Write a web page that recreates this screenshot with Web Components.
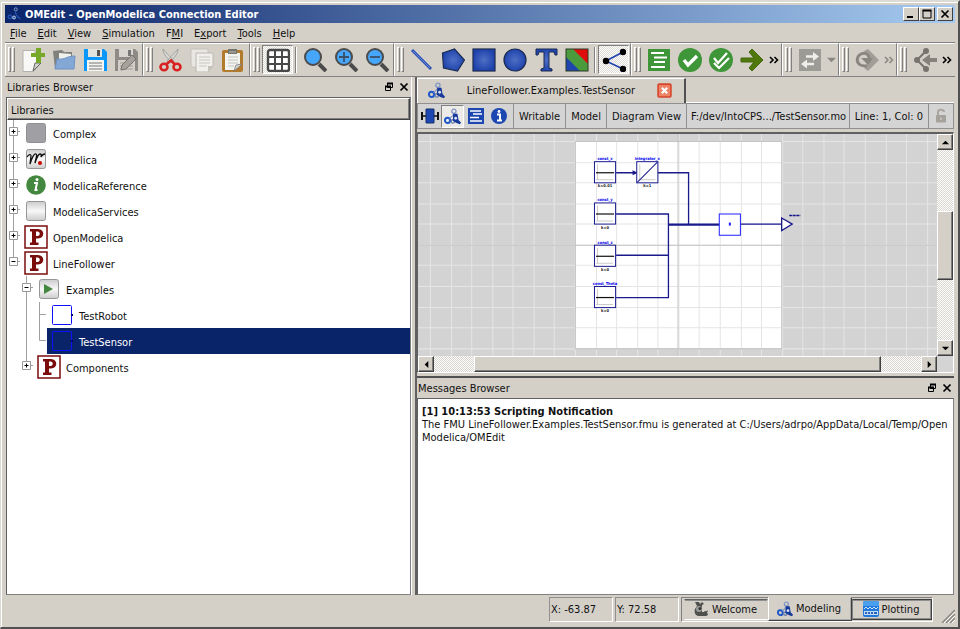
<!DOCTYPE html>
<html lang="en">
<head>
<meta charset="utf-8">
<title>OMEdit - OpenModelica Connection Editor</title>
<style>
html, body { margin: 0; height: 100%; background: #fff; }
body { font: 11px/13px "DejaVu Sans Condensed", "DejaVu Sans", sans-serif; color: #111; overflow: hidden; }
</style>
</head>
<body>
<om-window></om-window>
<script>
const ICONS = {
  network: ['0 0 24 24', '<g fill="none"><circle cx="14" cy="4.500" r="3" stroke="#7f93c4" stroke-width="1.800"/><circle cx="5" cy="17.500" r="3.600" stroke="#1c56c8" stroke-width="2.800"/><circle cx="12.500" cy="19" r="2.400" stroke="#6d80ae" stroke-width="2"/><path d="M8 15l6-6" stroke="#8596bd" stroke-width="1.600"/></g><path d="M13 8h6l1.500 9 3.500 3.500-1.500 2.500-5-2-5-3z" fill="#16389a"/><circle cx="16.500" cy="14.500" r="2" fill="#dce4f6"/>'],
  netlight: ['0 0 24 24', '<g fill="none" stroke="#2456b8" stroke-width="2.2"><circle cx="5" cy="17" r="3" /><circle cx="15" cy="4" r="2.6" stroke="#8fa6cf" stroke-width="1.6"/><circle cx="12" cy="18" r="2.2" stroke="#99b3dd"/><path d="M15 8c-2 3 2 5 3 9l5 3"/></g>'],
  newdoc: ['0 0 24 24', '<path d="M2 2.500h12v4h5v9l-6 8H2z" fill="#f8f8f6" stroke="#b4b2ac"/><path d="M12 23l2-8 6 0z" fill="#d5d5d0" stroke="#666"/><path d="M15 0h5v5h5v4h-5v6h-5V9h-5V5h5z" fill="#76a928"/>'],
  open: ['0 0 24 24', '<path d="M1 3l9-1 2 2h8v17H3z" fill="#80817c"/><path d="M7 5l12 1v9H7z" fill="#f1f1ec"/><path d="M3 21L5 11c9 1 9-3 18-3l-1 13z" fill="#84a8d5" stroke="#6d93c4"/>'],
  save: ['0 0 24 24', '<path d="M1 1h20l3 3v19H1z" fill="#0a97fa"/><path d="M5 1h14v8H5z" fill="#e3e3e0"/><path d="M14 2h3v6h-3z" fill="#555"/><path d="M4 12h17v11H4z" fill="#f4f4f0"/><path d="M6 15h13M6 18h13M6 21h13" stroke="#777"/>'],
  saveas: ['0 0 24 24', '<path d="M1 1h20l3 3v19H1z" fill="#8e8b86"/><path d="M5 1h14v8H5z" fill="#d8d5d0"/><path d="M14 2h3v6h-3z" fill="#777"/><path d="M4 12h17v11H4z" fill="#d2cfc9"/><path d="M6 15h13M6 18h13M6 21h13" stroke="#a19d96"/><path d="M7 22l1-5L18 7l4 4-10 10z" fill="#a6a29b" stroke="#77746e"/>'],
  cut: ['0 0 24 24', '<path d="M4 1c0 5 4 9 9 14l2-2C11 8 7 5 4 1zM19 1c0 5-4 9-9 14l-2-2C12 8 16 5 19 1z" fill="#d7d7d4" stroke="#8e8e8a" stroke-width=".7"/><g fill="none" stroke="#d82222" stroke-width="2.600"><ellipse cx="5" cy="19" rx="3.500" ry="3.200"/><ellipse cx="18" cy="19" rx="3.500" ry="3.200"/><path d="M7 16.500l5-4 4 4"/></g>'],
  copy: ['0 0 24 24', '<path d="M1 1h17v18H1z" fill="#e8e7e3" stroke="#c5c2bb"/><path d="M6 5h17v13l-5 6H6z" fill="#f0efec" stroke="#bbb8b0"/><path d="M9 9h11M9 12h11M9 15h11M9 18h8" stroke="#cac7c1"/><path d="M18 23v-5h5z" fill="#c3c0b8"/>'],
  paste: ['0 0 24 24', '<rect x="1" y="2" width="21" height="22" rx="2" fill="#b27a2d"/><path d="M4 5h15v13l-5 4H4z" fill="#f3f3f0"/><path d="M7 9h10M7 12h10M7 15h10M7 18h6" stroke="#c2c2be"/><path d="M13 23l2-6 6-1z" fill="#d9d9d5" stroke="#777" stroke-width=".8"/><path d="M7 1h9v5H7z" fill="#74756f"/><path d="M8 4h7" stroke="#bbb"/>'],
  grid: ['0 0 24 24', '<rect x="2" y="2" width="21" height="21" rx="2" fill="#fff" stroke="#484848" stroke-width="2.400"/><path d="M2 9h21M2 16h21M9 2v21M16 2v21" stroke="#484848" stroke-width="2"/>'],
  zoom: ['0 0 24 24', '<path d="M16 16l7 7" stroke="#4b4b4b" stroke-width="4"/><circle cx="10" cy="9" r="8" fill="#45a6fb" stroke="#4b4b4b" stroke-width="2"/>'],
  zoomin: ['0 0 24 24', '<path d="M16 16l7 7" stroke="#4b4b4b" stroke-width="4"/><circle cx="10" cy="9" r="8" fill="#45a6fb" stroke="#4b4b4b" stroke-width="2"/><path d="M5 9h10M10 4v10" stroke="#3c5068" stroke-width="1.800"/>'],
  zoomout: ['0 0 24 24', '<path d="M16 16l7 7" stroke="#4b4b4b" stroke-width="4"/><circle cx="10" cy="9" r="8" fill="#45a6fb" stroke="#4b4b4b" stroke-width="2"/><path d="M5 9h10" stroke="#3c5068" stroke-width="1.800"/>'],
  line: ['0 0 24 24', '<path d="M2 2l19 19" stroke="#2a4fb5" stroke-width="3"/><path d="M3 3l17 17" stroke="#6f8bd0"/>'],
  polygon: ['0 0 24 24', '<path d="M1.500 5l12-4 10 11-7 11-14-3z" fill="url(#g)" stroke="#1b2b50" stroke-width="1.200"/>'],
  rect: ['0 0 24 24', '<rect x="1" y="1" width="22" height="22" fill="url(#g)" stroke="#1b2b50" stroke-width="1.200"/>'],
  ellipse: ['0 0 24 24', '<circle cx="12" cy="12" r="11" fill="url(#g)" stroke="#1b2b50" stroke-width="1.200"/>'],
  tool: ['0 0 24 24', '<path d="M2 1h21v6h-2l-1-3h-5v16l3 1v2H7v-2l3-1V4H5L4 7H2z" fill="url(#g)" stroke="#1b2b50"/>'],
  image: ['0 0 24 24', '<rect x="1" y="1" width="22" height="22" fill="#4b9a3c"/><path d="M8 1h15v15z" fill="#e00b0b"/><path d="M1 9l14 14H1z" fill="#1f44ad"/><rect x="1" y="1" width="22" height="22" fill="none" stroke="#2b3b22"/>'],
  connect: ['0 0 24 24', '<path d="M21 4L4 13l17 8" fill="none" stroke="#1f44ad" stroke-width="1.600"/><circle cx="21" cy="4" r="3.200"/><circle cx="4" cy="13" r="3.200"/><circle cx="21" cy="21" r="3.200"/>'],
  list: ['0 0 24 24', '<path d="M1 1h22v22H1z" fill="#3f9639"/><path d="M4 5h13M7 9.500h13M7 14h11M4 19h14" stroke="#fff" stroke-width="1.800"/>'],
  check: ['0 0 24 24', '<circle cx="12" cy="12" r="12" fill="#3f9639"/><path d="M6 12l4 5 9-9" fill="none" stroke="#fff" stroke-width="3.400"/>'],
  checks: ['0 0 24 24', '<circle cx="12" cy="12" r="12" fill="#3f9639"/><path d="M5 10l4 5 9-10M5 15l5 5 10-10" fill="none" stroke="#fff" stroke-width="2.200"/>'],
  arrow: ['0 0 24 24', '<path d="M1 10h13L9 4l3-3 11 11-11 11-3-3 5-6H1z" fill="#50780c" stroke="#45680a"/>'],
  swap: ['0 0 24 24', '<path d="M1 1h22v22H1z" fill="#9d9b95"/><path d="M8 8.500h8M8 16h8" stroke="#f0eeea" stroke-width="2.400"/><path d="M15 4l6 4.500-6 4.500zM9 11.500L3 16l6 4.500z" fill="#f0eeea"/>'],
  redo: ['0 0 24 24', '<path d="M9 3l4-2 11 11-11 11-4-3 6-8z" fill="#a19e98"/><path d="M14 14V9c-1-3-4-5-8-3-4 2-5 7-2 10 2 2 5 2 8 2" fill="none" stroke="#8a8781" stroke-width="3"/><path d="M6 10h12l-5 7z" fill="#8a8781"/>'],
  back: ['0 0 24 24', '<path d="M13 3L4 12l9 9" fill="none" stroke="#77746e" stroke-width="2"/><circle cx="13" cy="3" r="3" fill="#77746e"/><circle cx="4" cy="12" r="3" fill="#77746e"/><circle cx="13" cy="21" r="3" fill="#77746e"/><path d="M24 10h-7V6l-8 6 8 6v-4h7z" fill="#85827c"/>'],
  blockicon: ['0 0 20 20', '<path d="M6 3h8v14H6z" fill="#1c46b0" stroke="#16306f"/><path d="M2 6v8M18 6v8" stroke="#111" stroke-width="2"/><path d="M2 10h4M14 10h4" stroke="#111" stroke-width="1.600"/>'],
  text: ['0 0 16 16', '<path d="M0 0h16v16H0z" fill="#1c46b0"/><path d="M2 3h11M5 6h9M2 9.500h9M2 13h12" stroke="#fff" stroke-width="1.400"/>'],
  info: ['0 0 16 16', '<circle cx="8" cy="8" r="8" fill="#1c46b0"/><path d="M6 6.500h3v5M6 12.500h5" stroke="#fff" stroke-width="2" fill="none"/><circle cx="8" cy="3.500" r="1.400" fill="#fff"/>'],
  lock: ['0 0 16 16', '<path d="M5 7V4c0-3 6-3 6 0" fill="none" stroke="#aaa79f" stroke-width="2"/><rect x="3" y="7" width="10" height="7.500" rx="1" fill="#a5a29b"/><path d="M8 9.500v2.500" stroke="#ddd"/>'],
  tabclose: ['0 0 14 14', '<rect x="1" y="1" width="12" height="12" rx="1" fill="#ed8264" stroke="#d6452b" stroke-width="1.500"/><path d="M4.500 4.500l5 5M9.500 4.500l-5 5" stroke="#fff" stroke-width="2"/>'],
  restore: ['0 0 10 10', '<path d="M3.500 1.500h5v4h-5zM1.500 4.500h5v4h-5z" fill="#d4d0c8" stroke="#000"/><path d="M3 1.500h6M1 4.500h6" stroke="#000" stroke-width="2"/>'],
  cross: ['0 0 10 10', '<path d="M1.500 1.500l7 7M8.500 1.500l-7 7" stroke="#000" stroke-width="1.700"/>'],
  min: ['0 0 10 10', '<path d="M1 8h6" stroke="#000" stroke-width="2"/>'],
  max: ['0 0 10 10', '<path d="M1 1.500h8v7.500H1z" fill="none" stroke="#000"/><path d="M.5 1.500h9" stroke="#000" stroke-width="2"/>'],
  up: ['0 0 10 10', '<path d="M1 7l4-4 4 4z"/>'],
  down: ['0 0 10 10', '<path d="M1 3l4 4 4-4z"/>'],
  left: ['0 0 10 10', '<path d="M7 1L3 5l4 4z"/>'],
  right: ['0 0 10 10', '<path d="M3 1l4 4-4 4z"/>'],
  drop: ['0 0 10 10', '<path d="M0 3h10L5 8z" fill="#8b8881"/>'],
  more: ['0 0 10 10', '<path d="M1 2l3 3-3 3M5.500 2l3 3-3 3" fill="none" stroke="currentColor" stroke-width="1.600"/>'],
  complex: ['0 0 24 24', '<rect x="2.500" y="2.500" width="19" height="19" rx="2" fill="#a0a0a4" stroke="#909094"/>'],
  modelica: ['0 0 24 24', '<rect x="2.500" y="2.500" width="19" height="19" rx="2" fill="url(#s)" stroke="#969696"/><path d="M3 10c2-3 4-3 4-1l-1 8c2-6 4-11 6-10s-1 6-1 9c2-6 3-9 5-9s1 2 1 3c1-2 2-3 4-3" fill="none" stroke="#111" stroke-width="1.300"/><circle cx="16" cy="16" r="2" fill="#c00"/>'],
  reference: ['0 0 24 24', '<circle cx="12" cy="12" r="9.800" fill="#44883f"/><path d="M10 10h3l-1.500 7h2" fill="none" stroke="#fff" stroke-width="2"/><circle cx="13" cy="6.500" r="1.500" fill="#fff"/>'],
  services: ['0 0 24 24', '<rect x="2.500" y="2.500" width="19" height="19" rx="2" fill="url(#s)" stroke="#969696"/>'],
  pack: ['0 0 24 24', '<path d="M1 1h22v22H1z" fill="#fff" stroke="#7a0c0c" stroke-width="1.500"/><path d="M6 4h8c7 0 7 9.500 0 9.500h-2v4h2.500V20H6v-2.500h2v-11H6zM12 6.500v4.500h1.500c3 0 3-4.500 0-4.500z" fill="#7a0c0c" fill-rule="evenodd"/>'],
  play: ['0 0 24 24', '<rect x="2.500" y="2.500" width="19" height="19" rx="2" fill="url(#s)" stroke="#969696"/><path d="M7 7l9 5-9 5z" fill="#44883f"/>'],
  model: ['0 0 24 24', '<rect x="2.500" y="2.500" width="19" height="19" rx="1" fill="none" stroke="#1010ff"/><path d="M21 12h2" stroke="#00007f" stroke-width="2"/>'],
  snail: ['0 0 16 16', '<path d="M2 1h4l1 2 2-2 2 2-2 1 0 7h5l1 3-2 1H5c-3-1-4-4-3-7l2-3z" fill="#4f504e"/><circle cx="6" cy="8" r="3" fill="#9a9b98"/><circle cx="7" cy="7.500" r="1.500" fill="#333"/><path d="M11 11l4-1" stroke="#555"/>'],
  plot: ['0 0 16 16', '<rect x="0" y="0" width="16" height="16" rx="2" fill="#1f78da"/><path d="M0 2c0-2 1-2 2-2h12c1 0 2 0 2 2v3H0z" fill="#4ba0ee"/><path d="M1 8l2-2 2 2 2-2 2 2 2-2 2 2 2-2" fill="none" stroke="#cfe4fa"/><path d="M1 10h14v4H1z" fill="#c3dcf6"/><path d="M2 12h2M5 12h2M8 12h2M11 12h3" stroke="#2b62b8" stroke-width="2"/>'],
  grip: ['0 0 14 14', '<path d="M1 14L14 1M5 14l9-9M9 14l5-5" stroke="#8a8780" stroke-width="1.500"/><path d="M3 14L14 3M7 14l7-7M11 14l3-3" stroke="#fff"/>']
};

const define = (name, build) => customElements.define(name, class extends HTMLElement {
  connectedCallback() {
    if (this.shadowRoot) return;
    const t = document.createElement('template');
    t.innerHTML = build(this);
    this.attachShadow({ mode: 'open' }).append(t.content.cloneNode(true));
  }
});
const attr = (el, n, d = '') => el.getAttribute(n) ?? d;

define('om-icon', el => {
  const [box, art] = ICONS[attr(el, 'name')];
  return `<style>:host{display:inline-flex;flex:none;width:var(--icon,24px);height:var(--icon,24px)}svg{display:block;width:100%;height:100%}</style>
  <svg viewBox="${box}" aria-hidden="true"><defs><radialGradient id="g"><stop stop-color="#4f6fc4"/><stop offset="1" stop-color="#1f44ad"/></radialGradient><linearGradient id="s" x2="0" y2="1"><stop stop-color="#ccc"/><stop offset=".5" stop-color="#f8f8f8"/><stop offset="1" stop-color="#ccc"/></linearGradient></defs>${art}</svg>`;
});

define('om-titlebar', () => `<style>
:host{display:flex;align-items:center;height:18px;padding:0 2px;background:linear-gradient(90deg,#0a246a,#a6caf0);color:#fff;font-weight:bold}
h1{font:inherit;margin:0 auto 0 4px}
om-icon{--icon:14px} button om-icon{--icon:10px}
button{width:16px;height:14px;padding:0;display:grid;place-items:center;background:#d4d0c8;border:1px solid;border-color:#fff #404040 #404040 #fff}
button:last-child{margin-left:2px}
</style><om-icon name="netlight"></om-icon><h1>OMEdit - OpenModelica Connection Editor</h1>
<button aria-label="Minimize"><om-icon name="min"></om-icon></button><button aria-label="Maximize"><om-icon name="max"></om-icon></button><button aria-label="Close"><om-icon name="cross"></om-icon></button>`);

define('om-menubar', () => `<style>
:host{display:flex;height:18px;align-items:center;gap:11px;padding:1px 5px 0;border-bottom:1px solid #808080}
button{all:unset}u{text-underline-offset:1px}
</style>${['<u>F</u>ile', '<u>E</u>dit', '<u>V</u>iew', '<u>S</u>imulation', 'F<u>M</u>I', 'E<u>x</u>port', '<u>T</u>ools', '<u>H</u>elp'].map(m => `<button>${m}</button>`).join('')}`);

/* One toolbar strip: drag handle, buttons, optional overflow chevron. */
define('om-toolgroup', el => `<style>
:host{display:flex;align-items:center;height:33px;flex:none;border:solid;border-width:1px;border-color:#fff #808080 #d4d0c8 #fff;box-sizing:border-box;padding:0 1px 0 2px}
i{width:3px;height:25px;border:1px solid;border-color:#fff #808080 #808080 #fff;box-sizing:border-box;margin-right:1px}
i+i{margin-right:2px}
.sep{width:0;height:26px;border:0;border-left:1px solid #808080;border-right:1px solid #fff;box-sizing:content-box;margin:0 2px}
button{width:31px;height:29px;border:1px solid transparent;padding:0;display:grid;place-items:center;background:none;box-sizing:border-box}
button.on{border-color:#808080 #fff #fff #808080;background:repeating-conic-gradient(#fff 0 25%,#dedbd5 0 50%) 0 0/2px 2px}
.more{width:13px;--icon:10px}.more.off{color:#8b8881}
.drop{width:12px;--icon:9px}
</style><i></i><i></i>${attr(el, 'items').split(' ').map(n => n === '|' ? '<i class="sep"></i>' :
  n === 'more' ? '<button class="more" aria-label="More"><om-icon name="more"></om-icon></button>' :
  n === 'moreoff' ? '<button class="more off" aria-label="More"><om-icon name="more"></om-icon></button>' :
  n === 'drop' ? '<button class="drop" aria-label="Options"><om-icon name="drop"></om-icon></button>' :
  `<button class="${n.endsWith('*') ? 'on' : ''}" aria-label="${n.replace('*', '')}"><om-icon name="${n.replace('*', '')}"></om-icon></button>`).join('')}`);

define('om-toolbar', () => `<style>:host{display:flex;border-bottom:1px solid #808080}om-toolgroup:last-child{flex:1;border-right-color:#d4d0c8}</style>
${['newdoc open save saveas', 'cut copy paste', 'grid* | zoom zoomin zoomout', 'line polygon rect ellipse tool image | connect*', 'list check checks arrow more', 'swap drop', 'redo moreoff', 'back more'].map(s => `<om-toolgroup items="${s}"></om-toolgroup>`).join('')}`);

define('om-dock', el => `<style>
:host{display:flex;flex-direction:column;min-height:0}
header{display:flex;align-items:center;height:20px;flex:none;padding:0 2px 0 1px;gap:5px;--icon:10px}
h2{font:inherit;margin:0 auto 0 0}
button{all:unset;display:flex}
div{flex:1;min-height:0;display:flex;flex-direction:column;background:#fff;border:1px solid;border-color:#606060 #808080 #808080 #606060}
</style><header><h2>${attr(el, 'label')}</h2><button aria-label="Float"><om-icon name="restore"></om-icon></button><button aria-label="Close"><om-icon name="cross"></om-icon></button></header><div><slot></slot></div>`);

/* guides: one letter per 13px column. v line, t branch, l last branch, + and p collapsed, m and n expanded. */
define('om-treeitem', el => {
  const paths = { ' ': '', v: 'M6.500 0v26', t: 'M6.500 0v26M6.500 12.500h6.500', l: 'M6.500 0v12.500h6.500', '+': 'M6.500 0v26M6.500 11.500h6.500', p: 'M6.500 0v11.500h6.500', m: 'M6.500 0v26M6.500 11.500h6.500', n: 'M6.500 0v11.500h6.500' };
  const cols = [...attr(el, 'guides')].map(c => `<svg width="13" height="26"><path d="${paths[c]}" stroke="#a0a0a0" fill="none"/>${'+pmn'.includes(c) ? `<path d="M2.500 7.500h8v8h-8z" fill="#fff" stroke="#999"/><path d="M4.500 11.500h4${'+p'.includes(c) ? 'M6.500 9.500v4' : ''}" stroke="#000"/>` : ''}</svg>`).join('');
  return `<style>:host{display:flex;height:26px}svg{flex:none}
  span{flex:1;display:flex;align-items:center;gap:5px;padding:0 0 0 3px;margin-left:1px}
  b{font-weight:normal;padding-top:2px}
  :host([selected]) span{background:#0a246a;color:#fff}</style>${cols}<span><om-icon name="${attr(el, 'icon')}"></om-icon><b><slot></slot></b></span>`;
});

define('om-tree', () => `<style>:host{display:block}
.head{height:22px;box-sizing:border-box;background:#d4d0c8;padding:5px 3px 3px;border:1px solid;border-color:#fff #404040 #404040 #fff;box-shadow:inset -1px -1px #808080}
</style>
<div class="head">Libraries</div><div role="tree">
<om-treeitem guides="+" icon="complex">Complex</om-treeitem>
<om-treeitem guides="+" icon="modelica">Modelica</om-treeitem>
<om-treeitem guides="+" icon="reference">ModelicaReference</om-treeitem>
<om-treeitem guides="+" icon="services">ModelicaServices</om-treeitem>
<om-treeitem guides="+" icon="pack">OpenModelica</om-treeitem>
<om-treeitem guides="n" icon="pack">LineFollower</om-treeitem>
<om-treeitem guides=" m" icon="play">Examples</om-treeitem>
<om-treeitem guides=" vt" icon="model">TestRobot</om-treeitem>
<om-treeitem guides=" vl" icon="model" selected>TestSensor</om-treeitem>
<om-treeitem guides=" p" icon="pack">Components</om-treeitem></div>`);

define('om-scrollbar', el => {
  const v = attr(el, 'dir') === 'v';
  return `<style>:host{display:flex;flex-direction:${v ? 'column' : 'row'};background:repeating-conic-gradient(#fff 0 25%,#d8d5ce 0 50%) 0 0/2px 2px}
  button,i{box-sizing:border-box;background:#d4d0c8;border:1px solid;border-color:#fff #404040 #404040 #fff;box-shadow:inset -1px -1px #808080}
  button{width:16px;height:16px;padding:0;flex:none;display:grid;place-items:center;--icon:9px}
  i{flex:${attr(el, 'thumb')}}s{flex:${attr(el, 'before')}}u{flex:${attr(el, 'after')}}</style>
  <button aria-label="Back"><om-icon name="${v ? 'up' : 'left'}"></om-icon></button><s></s><i></i><u></u><button aria-label="Forward"><om-icon name="${v ? 'down' : 'right'}"></om-icon></button>`;
});

define('om-diagram', () => {
  const step = 20.57, lines = [];
  for (let k = -30; k < 40; k++) {
    const x = Math.round(575 + k * step) + .5, y = Math.round(142 + k * step) + .5;
    lines.push(`M${x} -300V900M0 ${y}H1500`);
  }
  const block = (x, y, top, bottom) => `<rect x="${x + .5}" y="${y + .5}" width="21" height="21" fill="#fff" stroke="#1a1a90"/>
    <path d="M${x + 3.500} ${y + 3}v16M${x + 2} ${y + 18.500}h17" stroke="#ccc"/>
    <text x="${x + 11}" y="${y - 1}" fill="#0000f0">${top}</text><text x="${x + 11}" y="${y + 26}" fill="#222">${bottom}</text>`;
  const constant = (y, top, bottom) => block(594, y, top, bottom) + `<path d="M596 ${y + 11.500}h18" stroke="#111" stroke-width="1.200"/>`;
  return `<style>:host{display:block;overflow:hidden;background:#d3d3d3;position:relative}
  svg{position:absolute;inset:0;width:100%;height:100%}
  text{font:bold 4px "DejaVu Sans Condensed",sans-serif;text-anchor:middle}</style>
  <svg viewBox="418 135 518 221" preserveAspectRatio="xMidYMid slice" fill="none">
  <path d="M575 142h206v206H575z" fill="#fff"/><path d="${lines.join('')}" stroke="#e5e5e5"/>
  <path d="M575.500 142.500h205v206h-205z" stroke="#c4c4c4"/><path d="M0 245.500h1500M677.500 -300v1200" stroke="#c4c4c4"/>
  <g stroke="#1a1a8c" stroke-width="1.300"><path d="M616 173.500h20M657 173.500h31v51M616 214.500h52v83h-52M616 255.500h52M740 224.500h40"/><path d="M668 225h51" stroke-width="2.200"/><path d="M780.500 218.500l10.500 6-10.500 6.500z" fill="#fff"/><path d="M633 172v3l3-1.500z" fill="#1a1a8c"/><path d="M788 216h11" stroke-dasharray="3 .5"/></g>
  ${constant(162, 'const_x', 'k=0.01')}${constant(203, 'const_y', 'k=0')}${constant(245, 'const_z', 'k=0')}${constant(286, 'const_Theta', 'k=0')}
  ${block(636, 162, 'integrator_x', 'k=1')}<path d="M637 183l20-20" stroke="#1a1a90"/>
  <path d="M718.500 214.500h21v21h-21z" fill="#fff" stroke="#2020ff"/><path d="M728 223h2v3h-2z" fill="#2020ff"/></svg>`;
});

define('om-editor', () => `<style>
:host{display:flex;flex-direction:column;min-height:0}
.tabs{display:flex;height:26px;flex:none;padding-top:1px;box-sizing:border-box}
.tabs button{font:inherit;color:inherit;display:flex;align-items:center;border:0;border-top:1px solid #fff;border-left:1px solid #fff;border-right:2px solid #505050;background:#d4d0c8;width:269px;box-sizing:border-box;padding:0 12px 2px 10px;--icon:17px}
.tabs span{margin:0 auto}.tabs .x{--icon:15px}
.tabs p{flex:1;margin:0;border-bottom:1px solid #fff}
.bar{display:flex;height:26px;flex:none;box-sizing:border-box;background:#d4d4d4;border:1px solid #909090}
.bar>*{display:flex;align-items:center;border-right:1px solid #909090;padding:0 5px;white-space:nowrap;overflow:hidden;flex:none}
.bar>:last-child{border:0;padding:0 4px}
.bar>.views{padding:0 3px 0 0;--icon:16px}
.views button{width:23px;height:23px;border:1px solid transparent;padding:0;background:none;display:grid;place-items:center}
.views button:first-child{--icon:20px}
.views .on{border-color:#808080 #fff #fff #808080;background:#ecebe8;--icon:17px}
.bar>.path{flex:1;padding:0 2px 0 4px}
.stage{flex:1;min-height:0;margin-top:3px;display:grid;grid-template:1fr 16px/1fr 16px;background:#d4d4d4;border:solid;border-width:2px 1px 1px;border-color:#606060 #fff #fff #606060}
</style><div class="tabs"><button role="tab"><om-icon name="network"></om-icon><span>LineFollower.Examples.TestSensor</span><om-icon class="x" name="tabclose"></om-icon></button><p></p></div>
<div class="bar"><div class="views"><button aria-label="Icon view"><om-icon name="blockicon"></om-icon></button><button class="on" aria-label="Diagram view"><om-icon name="network"></om-icon></button><button aria-label="Text view"><om-icon name="text"></om-icon></button><button aria-label="Documentation"><om-icon name="info"></om-icon></button></div>
<div>Writable</div><div>Model</div><div>Diagram View</div><div class="path">F:/dev/IntoCPS.../TestSensor.mo</div><div>Line: 1, Col: 0</div><div style="--icon:16px"><om-icon name="lock"></om-icon></div></div>
<div class="stage"><om-diagram></om-diagram><om-scrollbar dir="v" before="61" thumb="67" after="61"></om-scrollbar><om-scrollbar dir="h" before="40" thumb="406" after="40"></om-scrollbar></div>`);

define('om-message', () => `<style>:host{display:block;padding:6px 0 0 4px;word-break:break-all}strong,p{display:block;margin:0}</style>
<strong>[1] 10:13:53 Scripting Notification</strong><p>The FMU LineFollower.Examples.TestSensor.fmu is generated at C:/Users/adrpo/AppData/Local/Temp/OpenModelica/OMEdit</p>`);

define('om-statusbar', () => `<style>
:host{display:flex;height:31px;align-items:center;justify-content:flex-end;box-sizing:border-box;padding-bottom:3px;--icon:16px}
.cell{width:64px;height:25px;box-sizing:border-box;border:1px solid;border-color:#909090 #fff #fff #909090;padding:5px 0 0 1px;margin-right:2px}
nav{display:flex;height:25px;box-sizing:border-box;border-left:1px solid #808080;border-top:1px solid #808080;border-right:1px solid #fff;border-bottom:1px solid #fff;padding:0 0 0 2px;align-items:center}
button{font:inherit;color:inherit;background:#d4d0c8;display:flex;align-items:center;justify-content:center;gap:3px;width:84px;height:21px;box-sizing:border-box;padding:0 2px 0 0;border:1px solid;border-color:#606060 #d4d0c8 #fff #d4d0c8;box-shadow:inset 0 1px #909090}
button:last-child{width:80px;border-color:#404040 #404040 #404040 #808080;box-shadow:inset 0 1px #909090,inset -1px -1px #909090}
button.on{height:24px;border-color:#d4d0c8 #404040 #404040 #fff;box-shadow:inset -1px -1px #aaa;align-self:flex-end}
.grip{--icon:14px;align-self:flex-end;margin-left:8px}
</style><div class="cell">X: -63.87</div><div class="cell">Y: 72.58</div>
<nav><button><om-icon name="snail"></om-icon>Welcome</button><button class="on"><om-icon name="network"></om-icon>Modeling</button><button><om-icon name="plot"></om-icon>Plotting</button></nav><om-icon class="grip" name="grip"></om-icon>`);

define('om-window', () => `<style>
:host{display:flex;flex-direction:column;height:100vh;box-sizing:border-box;background:#d4d0c8;border:solid;border-width:2px 2px 2px 1px;border-color:#dcdad5 #505050 #505050 #dcdad5;padding:3px 3px 1px 4px;box-shadow:inset 1px 1px #fff}
main{flex:1;min-height:0;display:grid;grid-template-columns:minmax(0,406fr) minmax(0,539fr);gap:3px;padding:0 1px}
.left{border-right:1px solid #fff}
.right{display:flex;flex-direction:column;min-height:0;border-left:2px solid #606060}
om-editor{flex:297}
.msg{flex:217;border-top:2px solid #505050;margin-top:3px}
om-dock{min-width:0}
</style><om-titlebar></om-titlebar><om-menubar></om-menubar><om-toolbar></om-toolbar>
<main><om-dock class="left" label="Libraries Browser"><om-tree></om-tree></om-dock>
<div class="right"><om-editor></om-editor><om-dock class="msg" label="Messages Browser"><om-message></om-message></om-dock></div></main>
<om-statusbar></om-statusbar>`);
</script>
</body>
</html>
